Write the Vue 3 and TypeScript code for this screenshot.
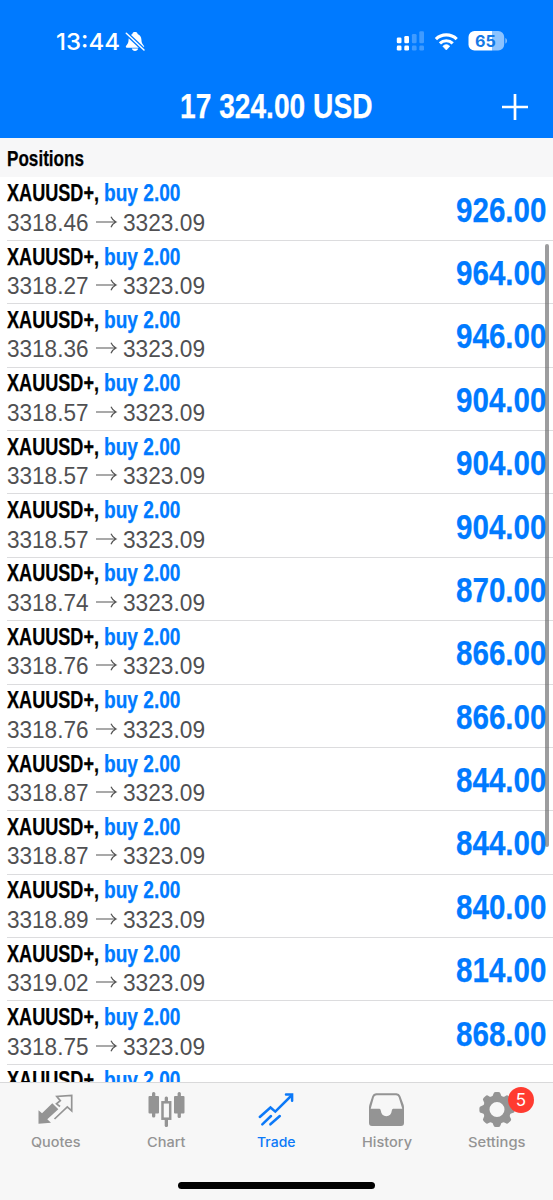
<script setup lang="ts">
import { h } from 'vue'
import type { FunctionalComponent } from 'vue'

interface FitProps {
  text: string
  w: number
  size: number
  box: number
  base: number
}

/* A line of text condensed to an exact advance width. */
const FitText: FunctionalComponent<FitProps> = (p) =>
  h('svg', { width: p.w, height: p.box, style: { fontSize: p.size + 'px' } }, [
    h(
      'text',
      { x: 0, y: p.base, textLength: p.w, lengthAdjust: 'spacingAndGlyphs', fill: 'currentColor' },
      p.text,
    ),
  ])
FitText.props = ['text', 'w', 'size', 'box', 'base']

interface Position {
  open: string
  profit: string
}

const positions: Position[] = [
  { open: '3318.46', profit: '926.00' },
  { open: '3318.27', profit: '964.00' },
  { open: '3318.36', profit: '946.00' },
  { open: '3318.57', profit: '904.00' },
  { open: '3318.57', profit: '904.00' },
  { open: '3318.57', profit: '904.00' },
  { open: '3318.74', profit: '870.00' },
  { open: '3318.76', profit: '866.00' },
  { open: '3318.76', profit: '866.00' },
  { open: '3318.87', profit: '844.00' },
  { open: '3318.87', profit: '844.00' },
  { open: '3318.89', profit: '840.00' },
  { open: '3319.02', profit: '814.00' },
  { open: '3318.75', profit: '868.00' },
]

const tabs = [
  { name: 'Quotes', w: 49.5 },
  { name: 'Chart', w: 38.5 },
  { name: 'Trade', w: 38.5 },
  { name: 'History', w: 50 },
  { name: 'Settings', w: 57.5 },
]

const teeth = [0, 45, 90, 135, 180, 225, 270, 315]
</script>

<template>
  <div class="screen">
    <header class="top">
      <div class="status">
        <FitText class="clock" text="13:44" :w="64" :size="23.500" :box="26" :base="21.500" />
        <svg class="bell" width="22" height="22" viewBox="124 30 22 22">
          <path
            d="M135 31.7c-1.5 0-2.5 1-2.6 2.2-2.5.9-3.7 3-3.8 5.7-.1 3-.8 4.300-2 5.600-.8.9-.9 1.200-.6 2 .3.5.8.6 1.400.6h15.300c.6 0 1.200-.2 1.400-.7.2-.7 0-1.200-.7-1.900-1.200-1.300-1.900-2.600-2-5.600-.1-2.700-1.300-4.800-3.800-5.700-.1-1.200-1.100-2.200-2.600-2.200zM131.800 48.600c.4 1.500 1.600 2.400 3.200 2.400s2.800-.9 3.200-2.400z"
            fill="#fff"
          />
          <path d="M126 33l18.500 17.500" stroke="#007aff" stroke-width="4" />
          <path d="M126.300 33.200l17.700 16.800" stroke="#fff" stroke-width="1.500" stroke-linecap="round" />
        </svg>
        <svg class="radio" width="114" height="26" viewBox="395 28 114 26">
          <g fill="#fff">
            <rect x="396.800" y="37.500" width="4.700" height="5.700" rx="1.300" />
            <rect x="404.300" y="36" width="4.700" height="7.200" rx="1.300" />
            <rect x="396.800" y="45.600" width="4.700" height="5" rx="1.300" />
            <rect x="404.300" y="45.600" width="4.700" height="5" rx="1.300" />
            <g opacity=".25">
              <rect x="411.900" y="34" width="4.700" height="9.200" rx="1.300" />
              <rect x="419.300" y="31.300" width="4.700" height="11.900" rx="1.300" />
              <rect x="411.900" y="45.600" width="4.700" height="5" rx="1.300" />
              <rect x="419.300" y="45.600" width="4.700" height="5" rx="1.300" />
            </g>
          </g>
          <g fill="none" stroke="#fff" stroke-width="3.200">
            <path d="M435.900 39.100a15 15 0 0 1 20.800 0" />
            <path d="M439.900 43.300a9.300 9.300 0 0 1 12.800 0" />
          </g>
          <path d="M442.800 46.200a5.200 5.200 0 0 1 7 0l-3.500 3.800z" fill="#fff" stroke="#fff" stroke-width=".6" stroke-linejoin="round" />
          <path d="M474.500 31h17.700v19.500h-17.700a6 6 0 0 1-6-6v-7.500a6 6 0 0 1 6-6z" fill="#fff" />
          <path d="M492.200 31h6a6 6 0 0 1 6 6v7.500a6 6 0 0 1-6 6h-6z" fill="#fff" opacity=".55" />
          <path d="M505.400 37.900c2 .7 2 5 0 5.700z" fill="#fff" opacity=".55" />
          <text class="charge" x="475" y="46.600" textLength="20.800" lengthAdjust="spacingAndGlyphs">65</text>
        </svg>
      </div>
      <div class="bar">
        <FitText class="cond" text="17 324.00 USD" :w="192.500" :size="34.500" :box="34" :base="28" />
        <svg class="plus" width="28" height="28" viewBox="0 0 28 28">
          <path d="M14 1v26M1 14h26" stroke="#fff" stroke-width="2.700" />
        </svg>
      </div>
    </header>

    <h2 class="section">
      <FitText class="cond" text="Positions" :w="77" :size="22" :box="24" :base="19" />
    </h2>

    <main class="list">
      <div v-for="(p, i) in positions" :key="i" class="row">
        <div class="info">
          <div class="line">
            <FitText class="cond" text="XAUUSD+," :w="92" :size="23" :box="26" :base="21.500" />
            <FitText class="cond blue side" text="buy 2.00" :w="76.500" :size="23" :box="26" :base="21.500" />
          </div>
          <div class="line quote">
            <FitText :text="p.open" :w="81.500" :size="23" :box="28" :base="22.500" />
            <svg class="arrow" width="22" height="28" viewBox="0 0 22 28">
              <path d="M0 14h20M15 8.800q1.500 3.700 5 5.200q-3.500 1.500-5 5.200" fill="none" stroke="#555" stroke-width="1.200" />
            </svg>
            <FitText text="3323.09" :w="82" :size="23" :box="28" :base="22.500" />
          </div>
        </div>
        <FitText class="cond blue" :text="p.profit" :w="90.500" :size="34.800" :box="34" :base="29.700" />
      </div>
      <div class="row">
        <div class="info">
          <div class="line">
            <FitText class="cond" text="XAUUSD+," :w="92" :size="23" :box="26" :base="21.500" />
            <FitText class="cond blue side" text="buy 2.00" :w="76.500" :size="23" :box="26" :base="21.500" />
          </div>
        </div>
      </div>
      <div class="thumb"></div>
    </main>

    <nav class="tabs">
      <div v-for="t in tabs" :key="t.name" class="tab" :class="{ active: t.name === 'Trade' }">
        <svg v-if="t.name === 'Quotes'" width="40" height="40" viewBox="35 1089 40 40">
          <path d="M38.500 1123.700V1110.300L42 1113.200L52.300 1103.200L58.300 1109.200L47.300 1119.300L51 1122.700Z" fill="currentColor" />
          <path
            d="M60 1106.500L56.500 1103.800L60.300 1100.700L56.800 1096.500L71.700 1095.500V1110.800L67.300 1106.800L54.500 1119"
            fill="none"
            stroke="currentColor"
            stroke-width="1.700"
          />
        </svg>
        <svg v-else-if="t.name === 'Chart'" width="40" height="40" viewBox="145.500 1089 40 40">
          <g fill="currentColor">
            <rect x="148" y="1096" width="10.500" height="17.500" rx="1" />
            <rect x="151.500" y="1092" width="3.300" height="25.500" rx="1.500" />
            <rect x="173.500" y="1096" width="10.500" height="17.500" rx="1" />
            <rect x="177.100" y="1092" width="3.300" height="26" rx="1.500" />
            <rect x="164.200" y="1096.500" width="3.300" height="6" rx="1.500" />
            <rect x="164.200" y="1118" width="3.300" height="9" rx="1.500" />
          </g>
          <rect x="162" y="1102.300" width="7.700" height="16.400" fill="none" stroke="currentColor" stroke-width="2.500" />
        </svg>
        <svg v-else-if="t.name === 'Trade'" width="40" height="40" viewBox="256.500 1089 40 40">
          <g fill="none" stroke="currentColor" stroke-width="2.500" stroke-linecap="round">
            <path d="M260.300 1117L271 1107.500L275.800 1111.600L292 1095.500" stroke-linejoin="miter" />
            <path d="M286.500 1094.600H292.600V1100.700" />
            <path d="M262.800 1124.300L271.500 1116M270.900 1124.300L280.300 1116" />
          </g>
        </svg>
        <svg v-else-if="t.name === 'History'" width="40" height="40" viewBox="367 1089 40 40">
          <path
            fill="currentColor"
            fill-rule="evenodd"
            d="M376 1093.300H396.500Q399.300 1093.300 400.300 1096L403.500 1104.500Q404 1106 404 1107.500V1123Q404 1126 401 1126H372Q369 1126 369 1123V1107.500Q369 1106 369.500 1104.500L372.300 1096Q373.300 1093.300 376 1093.300ZM376.700 1095.300Q374.700 1095.300 374 1097L370.700 1108.700H379.500Q380.500 1108.700 380.700 1110.300Q381.500 1116.200 386.300 1116.200Q391.100 1116.200 391.900 1110.300Q392.100 1108.700 393.100 1108.700H402.300L398.600 1097Q398 1095.300 396 1095.300Z"
          />
        </svg>
        <svg v-else width="44" height="40" viewBox="-21 -20.500 44 40">
          <g fill="currentColor">
            <path
              v-for="a in teeth"
              :key="a"
              :transform="`rotate(${a})`"
              d="M-6 -12.500Q-4 -13-3.600 -15.500Q-3.300 -17.600-1.500 -17.600H1.500Q3.300 -17.600 3.600 -15.500Q4 -13 6 -12.500V-10H-6Z"
            />
          </g>
          <circle r="10.600" fill="none" stroke="currentColor" stroke-width="6.200" />
        </svg>
        <span v-if="t.name === 'Settings'" class="badge">5</span>
        <FitText class="label" :text="t.name" :w="t.w" :size="13.200" :box="20" :base="14" />
      </div>
    </nav>
    <div class="home"></div>
  </div>
</template>

<style>
body {
  margin: 0;
  background: #fff;
}
</style>

<style scoped>
.screen {
  position: relative;
  display: flex;
  flex-direction: column;
  width: 553px;
  height: 1200px;
  overflow: hidden;
  background: #fff;
  color: #000;
  font-family: 'Liberation Sans', Arial, sans-serif;
}
svg {
  display: block;
  flex: none;
  overflow: visible;
}
.top {
  flex: none;
  height: 138px;
  background: #007aff;
  color: #fff;
}
.status {
  display: flex;
  align-items: center;
  height: 82px;
  padding-left: 56px;
}
.clock {
  font-family: Inter, sans-serif;
  font-weight: 500;
}
.bell {
  margin-left: 4px;
}
.radio {
  margin: 0 44px 0 auto;
}
.charge {
  font: 700 16px Inter, sans-serif;
  fill: #1478e6;
}
.bar {
  display: grid;
  grid-template-columns: 1fr auto 1fr;
  align-items: center;
  height: 49px;
}
.bar .cond {
  grid-column: 2;
}
.plus {
  justify-self: end;
  margin-right: 24px;
}
.cond {
  font-weight: 700;
  stroke: currentColor;
  stroke-width: 0.25px;
}
.blue {
  color: #007aff;
}
.section {
  flex: none;
  box-sizing: border-box;
  height: 39px;
  margin: 0;
  padding: 9px 6.5px 0;
  background: #f7f7f8;
}
.list {
  position: relative;
  flex: none;
  box-sizing: border-box;
  height: 905px;
  padding-top: 0.500px;
  overflow: hidden;
}
.row {
  display: flex;
  align-items: center;
  justify-content: space-between;
  box-sizing: border-box;
  height: 63.380px;
  margin-left: 7px;
  padding-right: 7px;
  border-bottom: 1px solid #dcdcde;
}
.info {
  padding-top: 2px;
  height: 61px;
}
.line {
  display: flex;
  height: 26px;
}
.side {
  margin-left: 4.500px;
}
.quote {
  height: 28px;
  margin-top: 2.500px;
  color: #505052;
}
.arrow {
  margin: 0 5px 0 7px;
}
.thumb {
  position: absolute;
  top: 66.500px;
  right: 4px;
  width: 4px;
  height: 603px;
  border-radius: 2px;
  background: rgba(110, 110, 112, 0.68);
}
.tabs {
  display: grid;
  grid-template-columns: repeat(5, 1fr);
  flex: none;
  box-sizing: border-box;
  height: 118px;
  padding-top: 6px;
  border-top: 1px solid #d9d9da;
  background: #f7f7f7;
  color: #949494;
}
.tab {
  position: relative;
  display: flex;
  flex-direction: column;
  align-items: center;
}
.active {
  color: #0c79f8;
}
.label {
  margin-top: 3.500px;
  font-family: Inter, sans-serif;
  font-weight: 500;
}
.tab:last-child .label {
  margin-right: 2px;
}
.badge {
  position: absolute;
  top: -2px;
  left: 65.500px;
  width: 26px;
  height: 26px;
  border-radius: 50%;
  background: #ff3b30;
  color: #fff;
  font: 400 17px/26px Inter, sans-serif;
  text-align: center;
}
.home {
  position: absolute;
  bottom: 11px;
  left: 178px;
  width: 197px;
  height: 7px;
  border-radius: 4px;
  background: #000;
}
</style>
